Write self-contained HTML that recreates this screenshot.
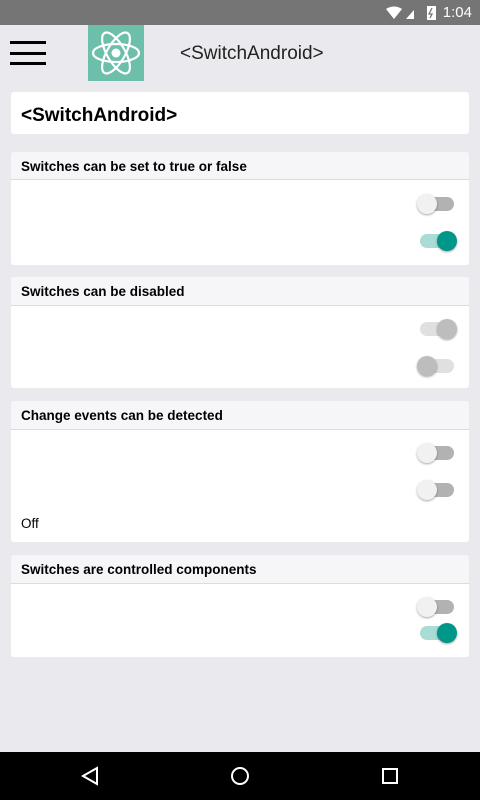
<!DOCTYPE html><html><head><style>
body{margin:0;width:480px;height:800px;background:#e9e9ee;font-family:"Liberation Sans",sans-serif;position:relative;overflow:hidden}
.abs{position:absolute}
.card{position:absolute;left:11px;width:458px;background:#fff;border-radius:3px;overflow:hidden}
.hd{background:#f6f6f8;border-bottom:1px solid #dcdce0;height:28px;box-sizing:border-box;padding-left:10px;font-size:13.5px;font-weight:bold;line-height:29px;color:#000}
.sw{position:absolute;left:409px;width:34px;height:14px;border-radius:7px}
.th{position:absolute;width:20px;height:20px;border-radius:50%;top:-3px;box-shadow:0 1px 2px rgba(0,0,0,.35)}
.off{background:#b2b2b2}.off .th{left:-3px;background:#f1f1f1}
.on{background:#a9dcd5}.on .th{left:17px;background:#009688}
.d1{background:#e0e0e0}.d1 .th{left:17px;background:#bdbdbd}
.d0{background:#e0e0e0}.d0 .th{left:-3px;background:#bdbdbd}
</style></head><body>
<div class="abs" style="left:0;top:0;width:480px;height:25px;background:#757575"></div>
<div class="abs" style="right:8px;top:4px;color:#fff;font-size:15px">1:04</div>
<svg class="abs" style="left:384px;top:5px" width="60" height="16"><path d="M2 4 Q10 -1 18 4 L10 14Z" fill="#fff"/><path d="M22 14 L30 5 L30 14Z" fill="#fff"/><rect x="43" y="1" width="9" height="14" fill="#fff"/><path d="M48 3 L45 9 L48 9 L46 13" stroke="#757575" stroke-width="1.3" fill="none"/></svg>
<div class="abs" style="left:10px;top:41px;width:36px;height:3px;background:#000"></div>
<div class="abs" style="left:10px;top:52px;width:36px;height:3px;background:#000"></div>
<div class="abs" style="left:10px;top:62px;width:36px;height:3px;background:#000"></div>
<div class="abs" style="left:88px;top:25px;width:56px;height:56px;background:#6bbfab"></div>
<svg class="abs" style="left:88px;top:25px" width="56" height="56"><g fill="none" stroke="#fff" stroke-width="2.2"><ellipse cx="28" cy="28" rx="23" ry="9"/><ellipse cx="28" cy="28" rx="23" ry="9" transform="rotate(60 28 28)"/><ellipse cx="28" cy="28" rx="23" ry="9" transform="rotate(-60 28 28)"/></g><circle cx="28" cy="28" r="4.5" fill="#fff"/></svg>
<div class="abs" style="left:180px;top:43px;font-size:19px;color:#222">&lt;SwitchAndroid&gt;</div>
<div class="card" style="top:92px;height:42px"><div style="padding:13px 0 0 10px;font-size:19px;font-weight:bold">&lt;SwitchAndroid&gt;</div></div>
<div class="card" style="top:152px;height:113px"><div class="hd">Switches can be set to true or false</div>
<div class="sw off" style="top:45px"><div class="th"></div></div><div class="sw on" style="top:82px"><div class="th"></div></div></div>
<div class="card" style="top:277px;height:111px"><div class="hd" style="height:29px">Switches can be disabled</div>
<div class="sw d1" style="top:45px"><div class="th"></div></div><div class="sw d0" style="top:82px"><div class="th"></div></div></div>
<div class="card" style="top:401px;height:141px"><div class="hd" style="height:29px">Change events can be detected</div>
<div class="sw off" style="top:45px"><div class="th"></div></div><div class="sw off" style="top:82px"><div class="th"></div></div>
<div class="abs" style="left:10px;top:115px;font-size:13.5px">Off</div></div>
<div class="card" style="top:555px;height:102px"><div class="hd" style="height:29px">Switches are controlled components</div>
<div class="sw off" style="top:45px"><div class="th"></div></div><div class="sw on" style="top:71px"><div class="th"></div></div></div>
<div class="abs" style="left:0;top:752px;width:480px;height:48px;background:#000"></div>
<svg class="abs" style="left:0;top:752px" width="480" height="48"><g fill="none" stroke="#fff" stroke-width="2"><path d="M97 16 L83 24 L97 32Z"/><circle cx="240" cy="24" r="8"/><rect x="383" y="17" width="14" height="14"/></g></svg>
</body></html>
